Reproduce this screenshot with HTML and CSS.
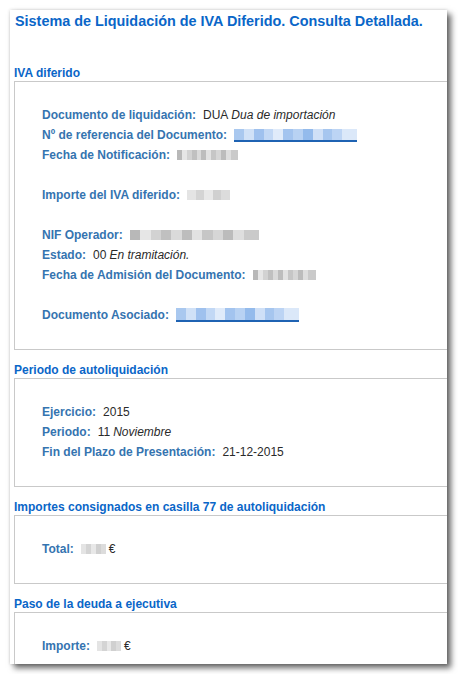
FILE: index.html
```html
<!DOCTYPE html>
<html lang="es">
<head>
<meta charset="utf-8">
<title>Sistema de Liquidación de IVA Diferido</title>
<link rel="stylesheet" href="styles.css">
</head>
<body>
<div class="panel">
  <h1 class="title">Sistema de Liquidación de IVA Diferido. Consulta Detallada.</h1>

  <section class="section first">
    <h2 class="heading">IVA diferido</h2>
    <div class="box">
      <div class="row"><span class="label">Documento de liquidación:</span><span class="value">DUA <i>Dua de importación</i></span></div>
      <div class="row"><span class="label">Nº de referencia del Documento:</span><span class="value"><span class="blur link ref"></span></span></div>
      <div class="row"><span class="label">Fecha de Notificación:</span><span class="value"><span class="blur gray fnot"></span></span></div>
      <div class="row"></div>
      <div class="row"><span class="label">Importe del IVA diferido:</span><span class="value"><span class="blur light imp"></span></span></div>
      <div class="row"></div>
      <div class="row"><span class="label">NIF Operador:</span><span class="value"><span class="blur gray nif"></span></span></div>
      <div class="row"><span class="label">Estado:</span><span class="value">00 <i>En tramitación.</i></span></div>
      <div class="row"><span class="label">Fecha de Admisión del Documento:</span><span class="value"><span class="blur gray fadm"></span></span></div>
      <div class="row"></div>
      <div class="row"><span class="label">Documento Asociado:</span><span class="value"><span class="blur link asoc"></span></span></div>
    </div>
  </section>

  <section class="section">
    <h2 class="heading">Periodo de autoliquidación</h2>
    <div class="box">
      <div class="row"><span class="label">Ejercicio:</span><span class="value">2015</span></div>
      <div class="row"><span class="label">Periodo:</span><span class="value">11 <i>Noviembre</i></span></div>
      <div class="row"><span class="label">Fin del Plazo de Presentación:</span><span class="value">21-12-2015</span></div>
    </div>
  </section>

  <section class="section">
    <h2 class="heading">Importes consignados en casilla 77 de autoliquidación</h2>
    <div class="box">
      <div class="row"><span class="label">Total:</span><span class="value"><span class="blur light tot"></span> €</span></div>
    </div>
  </section>

  <section class="section">
    <h2 class="heading">Paso de la deuda a ejecutiva</h2>
    <div class="box">
      <div class="row"><span class="label">Importe:</span><span class="value"><span class="blur light impo"></span> €</span></div>
    </div>
  </section>
</div>
</body>
</html>
```

FILE: styles.css
```css
html, body {
  margin: 0;
  padding: 0;
  background: #ffffff;
}

body {
  font-family: "Liberation Sans", Arial, sans-serif;
  padding: 10px;
}

.panel {
  width: 437px;
  height: 654px;
  box-sizing: border-box;
  background: #ffffff;
  overflow: hidden;
  padding: 3px 0 0 4px;
  box-shadow: 4px 4px 6px rgba(0, 0, 0, 0.6), 0 0 3px rgba(0, 0, 0, 0.18);
}

.title {
  margin: 0 0 0 1px;
  font-size: 14.4px;
  line-height: 16px;
  font-weight: bold;
  color: #0a66c8;
  white-space: nowrap;
}

.section {
  margin-top: 13px;
}

.section.first {
  margin-top: 37px;
}

.heading {
  margin: 0 0 1px 0;
  font-size: 12px;
  line-height: 14px;
  font-weight: bold;
  color: #0a66c8;
}

.box {
  width: 460px;
  border: 1px solid #c9c9c9;
  padding: 23px 0 24px 27px;
}

.row {
  height: 20px;
  line-height: 20px;
  font-size: 12px;
  display: flex;
  align-items: center;
  white-space: nowrap;
}

.label {
  font-weight: bold;
  color: #3574b0;
}

.value {
  margin-left: 7px;
  color: #2a2a2a;
  display: flex;
  align-items: center;
  gap: 3px;
}

.blur {
  display: inline-block;
  height: 10px;
}

.gray {
  background: linear-gradient(90deg,
    #b8b8b8 0 8%, #e6e6e6 8% 16%, #d2d2d2 16% 24%, #c0c0c0 24% 32%,
    #dadada 32% 40%, #bdbdbd 40% 48%, #e2e2e2 48% 56%, #c6c6c6 56% 64%,
    #d6d6d6 64% 72%, #bcbcbc 72% 80%, #dedede 80% 88%, #cacaca 88% 100%);
}

.light {
  background: linear-gradient(90deg,
    #e4e4e4 0 20%, #d4d4d4 20% 40%, #e8e8e8 40% 60%, #d0d0d0 60% 80%, #dcdcdc 80% 100%);
}

.link {
  height: 11px;
  border-bottom: 2px solid #1f63b3;
  background: linear-gradient(90deg,
    #a9c8ef 0 8%, #d0e1f7 8% 16%, #9fc1ee 16% 24%, #c2d8f5 24% 32%,
    #e0ebfa 32% 40%, #a3c4ef 40% 48%, #b8d2f3 48% 56%, #94bbec 56% 64%,
    #cfe0f7 64% 72%, #a6c6ef 72% 80%, #bcd4f4 80% 88%, #dbe8f9 88% 100%);
}

.ref { width: 123px; }
.asoc { width: 123px; height: 12px; }
.fnot { width: 61px; }
.imp { width: 43px; }
.nif { width: 129px; }
.fadm { width: 63px; }
.tot { width: 25px; }
.impo { width: 24px; }
```
